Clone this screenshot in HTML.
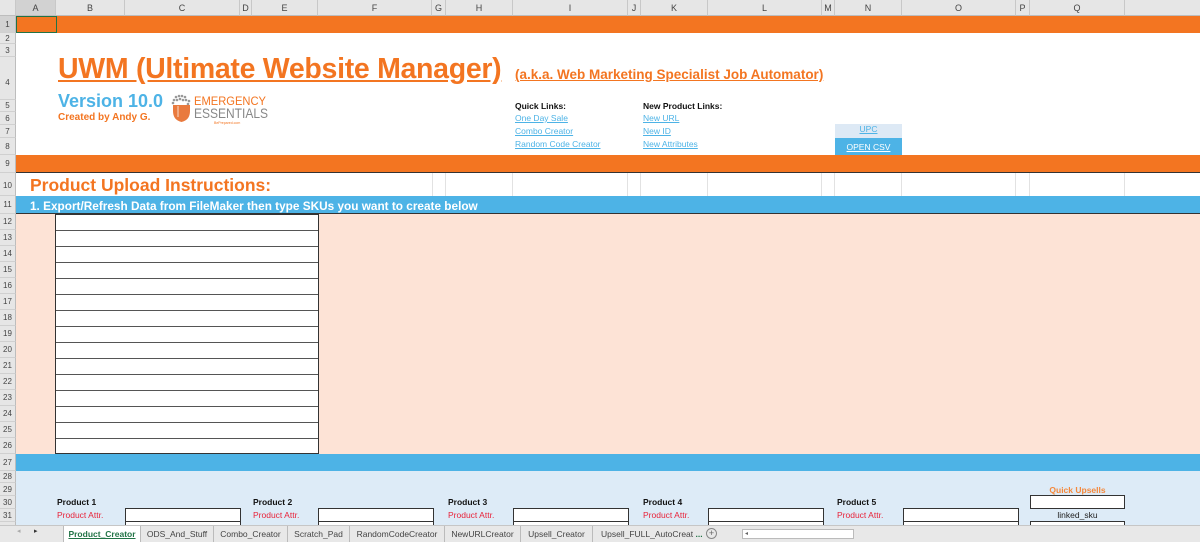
<!DOCTYPE html>
<html><head><meta charset="utf-8"><style>
*{margin:0;padding:0;box-sizing:border-box}
html,body{width:1200px;height:542px;overflow:hidden}
body{background:#fff;font-family:"Liberation Sans",sans-serif;position:relative;font-size:9px}
.a{position:absolute}
.colh{position:absolute;top:0;height:16px;background:#e6e6e6;border-right:1px solid #c8c8c8;border-bottom:1px solid #bdbdbd;font-size:9px;color:#444;text-align:center;line-height:16px}
.rh{position:absolute;left:0;width:16px;background:#e6e6e6;border-bottom:1px solid #d0d0d0;border-right:1px solid #bdbdbd;font-size:8px;color:#444;text-align:center}
.lnk{color:#4db3e6;text-decoration:underline;font-size:8.5px}
.b{font-weight:bold;font-size:8.5px;color:#111}
.box{position:absolute;background:#fff;border:1px solid #333}
.red{color:#e8233a;font-size:8.5px}
.tab{position:absolute;top:526px;height:16px;font-size:8.5px;color:#444;line-height:16px;border-right:1px solid #bbb;text-align:center;white-space:nowrap;overflow:hidden}
</style></head><body>
<div class="colh" style="left:0;width:16px"></div>
<div class="colh" style="left:16px;width:40px;background:#d2d2d2">A</div>
<div class="colh" style="left:56px;width:69px">B</div>
<div class="colh" style="left:125px;width:115px">C</div>
<div class="colh" style="left:240px;width:12px">D</div>
<div class="colh" style="left:252px;width:66px">E</div>
<div class="colh" style="left:318px;width:114px">F</div>
<div class="colh" style="left:432px;width:14px">G</div>
<div class="colh" style="left:446px;width:67px">H</div>
<div class="colh" style="left:513px;width:115px">I</div>
<div class="colh" style="left:628px;width:13px">J</div>
<div class="colh" style="left:641px;width:67px">K</div>
<div class="colh" style="left:708px;width:114px">L</div>
<div class="colh" style="left:822px;width:13px">M</div>
<div class="colh" style="left:835px;width:67px">N</div>
<div class="colh" style="left:902px;width:114px">O</div>
<div class="colh" style="left:1016px;width:14px">P</div>
<div class="colh" style="left:1030px;width:95px">Q</div>
<div class="colh" style="left:1125px;width:75px;border-right:none"></div>

<div class="rh" style="top:16px;height:17px;line-height:17px;background:#d2d2d2">1</div>
<div class="rh" style="top:33px;height:11px;line-height:11px">2</div>
<div class="rh" style="top:44px;height:13px;line-height:13px">3</div>
<div class="rh" style="top:57px;height:43px;line-height:43px;padding-top:4px">4</div>
<div class="rh" style="top:100px;height:12px;line-height:12px">5</div>
<div class="rh" style="top:112px;height:13px;line-height:13px">6</div>
<div class="rh" style="top:125px;height:13px;line-height:13px">7</div>
<div class="rh" style="top:138px;height:17px;line-height:17px">8</div>
<div class="rh" style="top:155px;height:18px;line-height:18px">9</div>
<div class="rh" style="top:173px;height:23px;line-height:26px">10</div>
<div class="rh" style="top:196px;height:18px;line-height:18px">11</div>
<div class="rh" style="top:214px;height:16px;line-height:16px">12</div>
<div class="rh" style="top:230px;height:16px;line-height:16px">13</div>
<div class="rh" style="top:246px;height:16px;line-height:16px">14</div>
<div class="rh" style="top:262px;height:16px;line-height:16px">15</div>
<div class="rh" style="top:278px;height:16px;line-height:16px">16</div>
<div class="rh" style="top:294px;height:16px;line-height:16px">17</div>
<div class="rh" style="top:310px;height:16px;line-height:16px">18</div>
<div class="rh" style="top:326px;height:16px;line-height:16px">19</div>
<div class="rh" style="top:342px;height:16px;line-height:16px">20</div>
<div class="rh" style="top:358px;height:16px;line-height:16px">21</div>
<div class="rh" style="top:374px;height:16px;line-height:16px">22</div>
<div class="rh" style="top:390px;height:16px;line-height:16px">23</div>
<div class="rh" style="top:406px;height:16px;line-height:16px">24</div>
<div class="rh" style="top:422px;height:16px;line-height:16px">25</div>
<div class="rh" style="top:438px;height:16px;line-height:16px">26</div>
<div class="rh" style="top:454px;height:17px;line-height:17px">27</div>
<div class="rh" style="top:471px;height:12px;line-height:12px">28</div>
<div class="rh" style="top:483px;height:13px;line-height:13px">29</div>
<div class="rh" style="top:496px;height:13px;line-height:13px">30</div>
<div class="rh" style="top:509px;height:13px;line-height:13px">31</div>
<div class="rh" style="top:522px;height:13px;line-height:13px">32</div>

<div class="a" style="left:16px;top:16px;width:1184px;height:17px;background:#f37521"></div>
<div class="a" style="left:16px;top:16px;width:41px;height:17px;border:1.5px solid #217346"></div>

<div class="a" style="left:58px;top:53px;font-size:28.5px;font-weight:bold;color:#f37521;text-decoration:underline;letter-spacing:-0.3px;white-space:nowrap">UWM (Ultimate Website Manager)</div>
<div class="a" style="left:515px;top:67px;font-size:13.5px;font-weight:bold;color:#f37521;text-decoration:underline;white-space:nowrap">(a.k.a. Web Marketing Specialist Job Automator)</div>
<div class="a" style="left:58px;top:91px;font-size:18px;font-weight:bold;color:#4db3e6">Version 10.0</div>
<div class="a" style="left:58px;top:112px;font-size:10px;font-weight:bold;color:#f37521">Created by Andy G.</div>
<svg class="a" style="left:170px;top:93px" width="100" height="32" viewBox="0 0 100 32">
<g fill="#999"><circle cx="6" cy="4" r="1.3"/><circle cx="9" cy="3" r="1.3"/><circle cx="12" cy="3" r="1.3"/><circle cx="15" cy="4" r="1.3"/><circle cx="4" cy="7" r="1.3"/><circle cx="7" cy="7" r="1.3"/><circle cx="10" cy="6" r="1.3"/><circle cx="13" cy="7" r="1.3"/><circle cx="16" cy="7" r="1.3"/><circle cx="19" cy="8" r="1.3"/><circle cx="3" cy="10" r="1.3"/><circle cx="18" cy="11" r="1.3"/></g>
<path d="M3 12 H20 V18 Q20 27 11.5 29 Q3 27 3 18 Z" fill="#e97a3e"/>
<path d="M8 13 V24" stroke="#fff" stroke-width="1.2" opacity=".6"/>
<text x="24" y="12" font-family="Liberation Sans" font-size="12" fill="#f37521" textLength="72" lengthAdjust="spacingAndGlyphs">EMERGENCY</text>
<text x="24" y="25" font-family="Liberation Sans" font-size="14" fill="#888" textLength="74" lengthAdjust="spacingAndGlyphs">ESSENTIALS</text>
<text x="44" y="31" font-family="Liberation Sans" font-size="3.5" fill="#f37521">BePrepared.com</text>
</svg>

<div class="a b" style="left:515px;top:101px">Quick Links:</div>
<div class="a lnk" style="left:515px;top:113px">One Day Sale</div>
<div class="a lnk" style="left:515px;top:126px">Combo Creator</div>
<div class="a lnk" style="left:515px;top:139px">Random Code Creator</div>
<div class="a b" style="left:643px;top:101px">New Product Links:</div>
<div class="a lnk" style="left:643px;top:113px">New URL</div>
<div class="a lnk" style="left:643px;top:126px">New ID</div>
<div class="a lnk" style="left:643px;top:139px">New Attributes</div>
<div class="a" style="left:835px;top:124px;width:67px;height:14px;background:#dde9f5;text-align:center"><span class="lnk">UPC</span></div>
<div class="a" style="left:835px;top:138px;width:67px;height:17px;background:#4db3e6;text-align:center;line-height:18px"><span style="color:#fff;text-decoration:underline;font-size:8.5px">OPEN CSV</span></div>

<div class="a" style="left:16px;top:155px;width:1184px;height:18px;background:#f37521;border-bottom:1px solid #333"></div>
<div class="a" style="left:16px;top:173px;width:1184px;height:23px;background:linear-gradient(#e2e2e2,#e2e2e2) 416px 0/1px 100% no-repeat,linear-gradient(#e2e2e2,#e2e2e2) 429px 0/1px 100% no-repeat,linear-gradient(#e2e2e2,#e2e2e2) 496px 0/1px 100% no-repeat,linear-gradient(#e2e2e2,#e2e2e2) 611px 0/1px 100% no-repeat,linear-gradient(#e2e2e2,#e2e2e2) 624px 0/1px 100% no-repeat,linear-gradient(#e2e2e2,#e2e2e2) 691px 0/1px 100% no-repeat,linear-gradient(#e2e2e2,#e2e2e2) 805px 0/1px 100% no-repeat,linear-gradient(#e2e2e2,#e2e2e2) 818px 0/1px 100% no-repeat,linear-gradient(#e2e2e2,#e2e2e2) 885px 0/1px 100% no-repeat,linear-gradient(#e2e2e2,#e2e2e2) 999px 0/1px 100% no-repeat,linear-gradient(#e2e2e2,#e2e2e2) 1013px 0/1px 100% no-repeat,linear-gradient(#e2e2e2,#e2e2e2) 1108px 0/1px 100% no-repeat"></div>
<div class="a" style="left:30px;top:175px;font-size:17.5px;font-weight:bold;color:#f37521;white-space:nowrap">Product Upload Instructions:</div>
<div class="a" style="left:16px;top:196px;width:1184px;height:18px;background:#4db3e6;border-bottom:1px solid #333"></div>
<div class="a" style="left:30px;top:199px;font-size:11.8px;font-weight:bold;color:#fff;white-space:nowrap">1. Export/Refresh Data from FileMaker then type SKUs you want to create below</div>
<div class="a" style="left:16px;top:214px;width:1184px;height:240px;background:#fde3d6"></div>
<div class="a" style="left:55px;top:214px;width:264px;height:240px;background:#fff;border:1px solid #333;background-image:repeating-linear-gradient(#fff 0 15px,#555 15px 16px)"></div>
<div class="a" style="left:16px;top:454px;width:1184px;height:17px;background:#4db3e6"></div>
<div class="a" style="left:16px;top:471px;width:1184px;height:55px;background:#ddebf7"></div>

<div class="a b" style="left:57px;top:497px">Product 1</div>
<div class="a red" style="left:57px;top:510px">Product Attr.</div>
<div class="box" style="left:125px;top:508px;width:116px;height:14px"></div>
<div class="box" style="left:125px;top:521px;width:116px;height:8px"></div>
<div class="a b" style="left:253px;top:497px">Product 2</div>
<div class="a red" style="left:253px;top:510px">Product Attr.</div>
<div class="box" style="left:318px;top:508px;width:116px;height:14px"></div>
<div class="box" style="left:318px;top:521px;width:116px;height:8px"></div>
<div class="a b" style="left:448px;top:497px">Product 3</div>
<div class="a red" style="left:448px;top:510px">Product Attr.</div>
<div class="box" style="left:513px;top:508px;width:116px;height:14px"></div>
<div class="box" style="left:513px;top:521px;width:116px;height:8px"></div>
<div class="a b" style="left:643px;top:497px">Product 4</div>
<div class="a red" style="left:643px;top:510px">Product Attr.</div>
<div class="box" style="left:708px;top:508px;width:116px;height:14px"></div>
<div class="box" style="left:708px;top:521px;width:116px;height:8px"></div>
<div class="a b" style="left:837px;top:497px">Product 5</div>
<div class="a red" style="left:837px;top:510px">Product Attr.</div>
<div class="box" style="left:903px;top:508px;width:116px;height:14px"></div>
<div class="box" style="left:903px;top:521px;width:116px;height:8px"></div>
<div class="a" style="left:1030px;top:485px;width:95px;text-align:center;font-weight:bold;font-size:8.5px;color:#f5883a">Quick Upsells</div>
<div class="box" style="left:1030px;top:495px;width:95px;height:14px"></div>
<div class="a" style="left:1030px;top:510px;width:95px;text-align:center;font-size:8.5px;color:#222">linked_sku</div>
<div class="box" style="left:1030px;top:521px;width:95px;height:8px"></div>

<div class="a" style="left:0;top:525px;width:1200px;height:17px;background:#e8e8e8;border-top:1px solid #c6c6c6"></div>
<div class="a" style="left:17px;top:527px;font-size:7px;color:#aaa">◂</div>
<div class="a" style="left:34px;top:527px;font-size:7px;color:#333">▸</div>
<div class="tab" style="left:63px;width:78px;background:#fff;color:#217346;font-weight:bold;text-decoration:underline;border-left:1px solid #bbb">Product_Creator</div>
<div class="tab" style="left:141px;width:73px">ODS_And_Stuff</div>
<div class="tab" style="left:214px;width:74px">Combo_Creator</div>
<div class="tab" style="left:288px;width:62px">Scratch_Pad</div>
<div class="tab" style="left:350px;width:95px">RandomCodeCreator</div>
<div class="tab" style="left:445px;width:76px">NewURLCreator</div>
<div class="tab" style="left:521px;width:72px">Upsell_Creator</div>
<div class="tab" style="left:593px;width:110px;border-right:none;text-align:left;padding-left:8px">Upsell_FULL_AutoCreat <b style="color:#217346">...</b></div>
<div class="a" style="left:706px;top:528px;width:11px;height:11px;border:1px solid #888;border-radius:50%;font-size:9px;line-height:9px;text-align:center;color:#666">+</div>
<div class="a" style="left:742px;top:529px;width:112px;height:10px;background:#fff;border:1px solid #bbb;font-size:6px;line-height:8px;padding-left:2px;color:#666">◂</div>
</body></html>
